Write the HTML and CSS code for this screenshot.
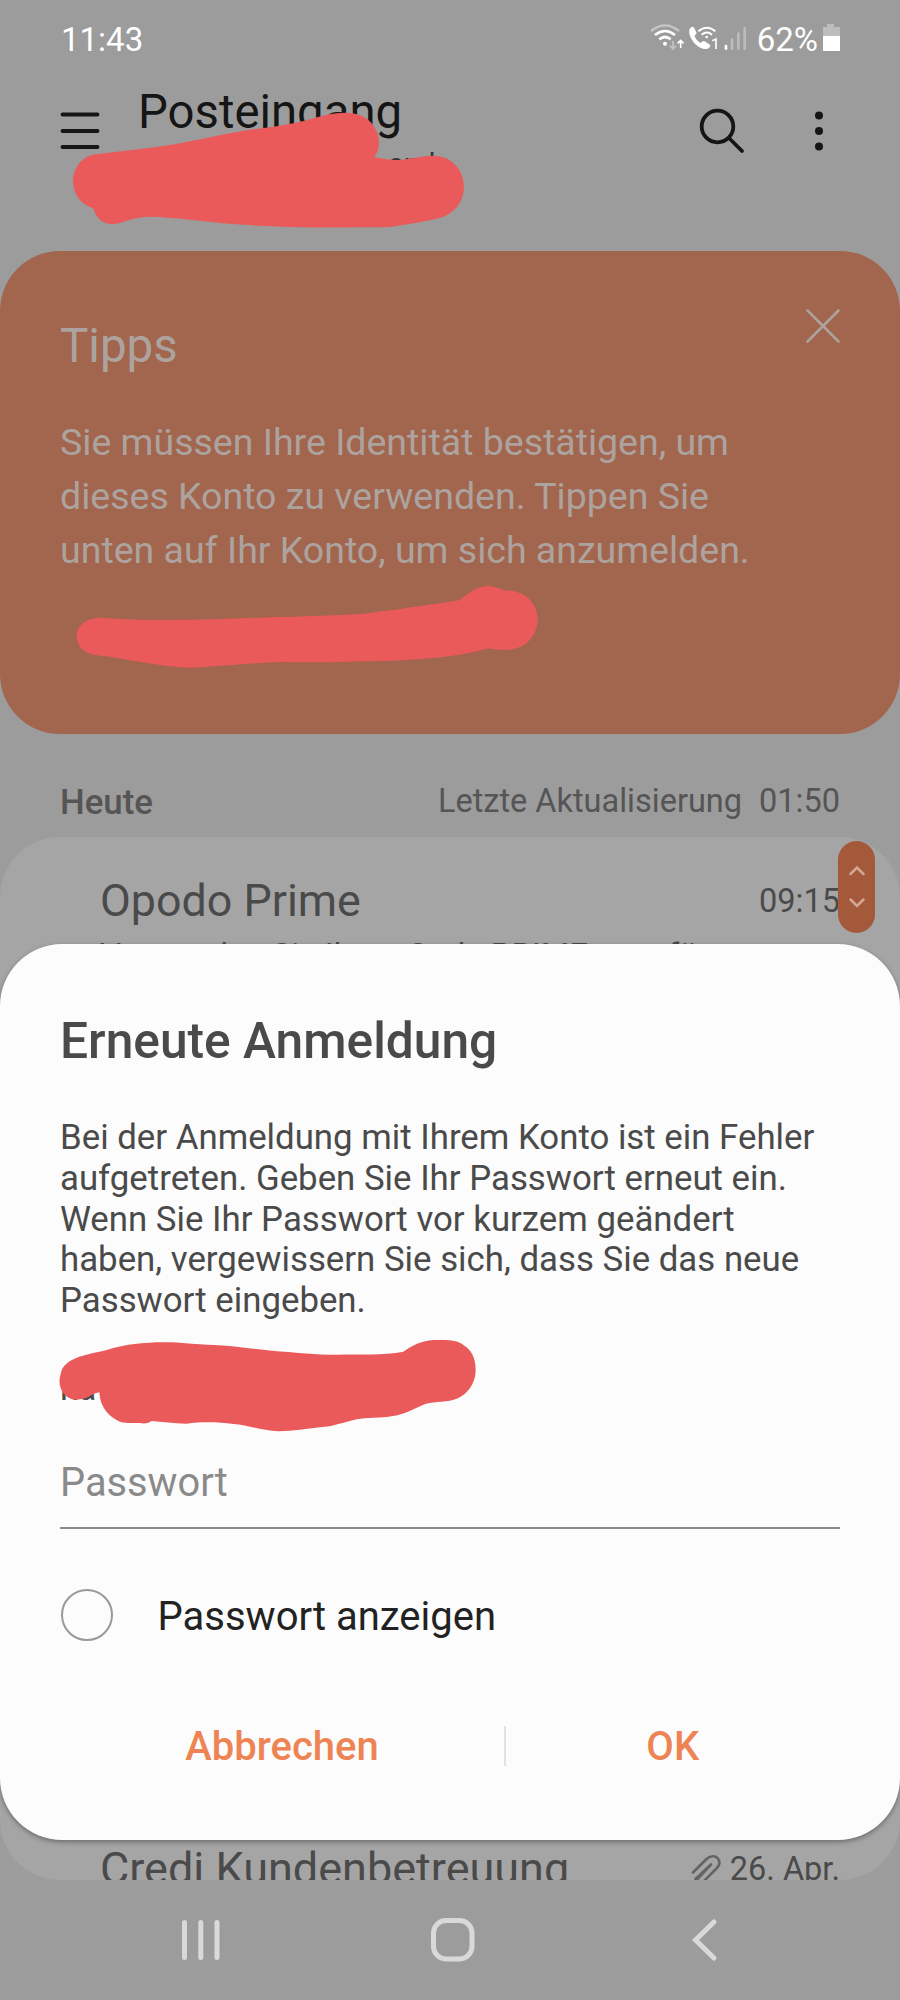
FILE: index.html
```html
<!DOCTYPE html>
<html lang="de">
<head>
<meta charset="utf-8">
<title>Posteingang</title>
<link rel="stylesheet" href="styles.css">
</head>
<body>
<div class="phone">
  <header class="status">
    <span class="time">11:43</span>
    <div class="indicators">
      <svg class="signals" viewBox="145 60 300 105">
        <g fill="none" stroke="#fff" stroke-width="8">
          <path d="M151 93Q193 60 235 93" stroke="#c4c4c4"/>
          <path d="M163 105Q193 81 223 105"/>
          <path d="M176 118Q193 104 210 118"/>
          <path d="M240 144V122M231 130L240 121L249 130" stroke-width="5"/>
          <path d="M217 122V146M208 137L217 147L226 137" stroke="#c4c4c4" stroke-width="5"/>
          <path d="M293 94Q319 72 344 94" stroke-width="6"/>
          <path d="M303 104Q319 91 334 104" stroke-width="6"/>
          <path d="M335 122L346 117V147" stroke-width="5"/>
        </g>
        <circle cx="193" cy="131" r="6" fill="#fff"/>
        <circle cx="318" cy="111" r="4" fill="#fff"/>
        <path d="M266 88Q271 78 279 81L288 99Q287 103 281 107Q287 122 299 129L308 123Q311 122 314 125L329 135Q329 143 319 147Q299 149 280 128Q263 108 266 88Z" fill="#fff"/>
        <g stroke-width="8" stroke-linecap="round" stroke="#bcbcbc">
          <path d="M376 138V146" stroke="#fff"/>
          <path d="M394 119V146M413 101V146M432 84V146"/>
        </g>
      </svg>
      <span class="percent">62%</span>
      <svg class="battery" viewBox="0 0 18 27"><path d="M5 0H12V3H18V27H1V3H5Z" fill="#bdbdbd"/><path d="M1 12H18V27H1Z" fill="#fff"/></svg>
    </div>
  </header>

  <div class="appbar">
    <svg class="menu" viewBox="0 0 40 38"><path d="M2.500 3.500H37.500M2.500 20H37.500M2.500 36H37.500" stroke="#151515" stroke-width="3.800" stroke-linecap="round"/></svg>
    <div class="heading">
      <h1>Posteingang</h1>
      <p>onde</p>
    </div>
    <svg class="search" viewBox="0 0 46 46"><g fill="none" stroke="#151515" stroke-width="3.800" stroke-linecap="round"><circle cx="18.500" cy="18.500" r="15.800"/><path d="M30 30L43 43"/></g></svg>
    <svg class="more" viewBox="0 0 10 40"><g fill="#151515"><circle cx="5" cy="4.500" r="4"/><circle cx="5" cy="20" r="4"/><circle cx="5" cy="35.500" r="4"/></g></svg>
  </div>

  <section class="tips">
    <div class="tips-head">
      <h2>Tipps</h2>
      <svg class="close" viewBox="0 0 34 34"><path d="M1.500 1.500L32.500 32.500M32.500 1.500L1.500 32.500" stroke="#ada39e" stroke-width="2.500" stroke-linecap="round"/></svg>
    </div>
    <p>Sie müssen Ihre Identität bestätigen, um<br>dieses Konto zu verwenden. Tippen Sie<br>unten auf Ihr Konto, um sich anzumelden.</p>
  </section>

  <div class="group">
    <span class="day">Heute</span>
    <span class="updated">Letzte Aktualisierung</span>
    <span class="updated-time">01:50</span>
  </div>

  <main class="mails">
    <article class="mail">
      <div class="mail-top"><span class="sender">Opodo Prime</span><time>09:15</time></div>
      <p class="preview">Verwenden Sie Ihren Code PRIME zum für</p>
    </article>
    <article class="mail last">
      <div class="mail-top"><span class="sender">Credi Kundenbetreuung</span>
        <svg class="clip" viewBox="0 0 32 32"><path d="M3 21L17 7.500C21 3.500 25 3.500 27.500 6C30 9 29 13 26 16L10 32M5 29L20 14M14 12L21 14" fill="none" stroke="none"/><path d="M3 19.500L16.500 6C20 2.500 25 2.500 27.500 5C30.500 8.500 29.500 12.500 26.500 15.500L10.500 31.500M5.500 26L21 11.500M21 11.500L4 30" fill="none" stroke="#646464" stroke-width="2.600" stroke-linecap="round"/></svg>
        <time>26. Apr.</time></div>
    </article>
    <div class="scroller"><svg viewBox="0 0 37 92"><path d="M12.500 33L19 26.500L25.500 33M12.500 58.500L19 65L25.500 58.500" fill="none" stroke="#d3a696" stroke-width="2.500" stroke-linecap="round"/></svg></div>
  </main>

  <nav class="navbar">
    <svg class="recents" viewBox="0 0 40 44"><path d="M4.500 4.500V39.500M20.800 4.500V39.500M37 4.500V39.500" stroke="#d9d9d9" stroke-width="5" stroke-linecap="round"/></svg>
    <svg class="home" viewBox="0 0 46 46"><rect x="3.500" y="3.500" width="38.500" height="38.500" rx="12.500" fill="none" stroke="#d9d9d9" stroke-width="5"/></svg>
    <svg class="back" viewBox="0 0 40 44"><path d="M24 4L5.500 22L24 40" fill="none" stroke="#d9d9d9" stroke-width="5" stroke-linecap="round"/></svg>
  </nav>

  <div class="dialog" role="dialog">
    <h2>Erneute Anmeldung</h2>
    <p class="message">Bei der Anmeldung mit Ihrem Konto ist ein Fehler<br>aufgetreten. Geben Sie Ihr Passwort erneut ein.<br>Wenn Sie Ihr Passwort vor kurzem geändert<br>haben, vergewissern Sie sich, dass Sie das neue<br>Passwort eingeben.</p>
    <p class="account">ka</p>
    <div class="field">Passwort</div>
    <label class="show"><span class="ring"></span><span class="label">Passwort anzeigen</span></label>
    <div class="actions"><button class="cancel">Abbrechen</button><i></i><button class="ok">OK</button></div>
  </div>

  <svg class="marks" viewBox="0 0 2700 6000">
    <g fill="#eb5a5a">
      <path d="M288 463C370 452 460 445 540 430C620 415 690 398 760 388C800 384 840 378 880 370C940 357 980 338 1040 338C1100 338 1137 380 1137 430C1136 452 1130 462 1122 472C1150 476 1170 480 1190 481C1220 480 1260 467 1300 467C1355 467 1392 510 1392 560C1392 600 1370 630 1335 648C1305 660 1270 664 1245 669C1210 674 1180 682 1140 682C1050 681 1000 684 900 682C830 680 760 677 700 672C620 666 530 652 455 650C425 650 400 656 380 662C360 669 350 672 330 672C300 668 287 648 280 625C240 612 220 580 219 545C220 500 248 468 288 463Z"/>
      <path transform="translate(0 720)" d="M300 1133C400 1142 550 1140 650 1138C780 1132 940 1130 1080 1122C1170 1112 1290 1095 1380 1080C1410 1055 1435 1038 1465 1038C1490 1038 1500 1052 1530 1052C1580 1055 1613 1095 1613 1138C1612 1190 1575 1230 1515 1230C1490 1230 1475 1225 1460 1226C1380 1250 1270 1257 1160 1263C1050 1264 950 1269 850 1266C760 1268 680 1278 570 1283C470 1280 380 1255 290 1246C255 1242 230 1220 230 1188C230 1155 260 1135 300 1133Z"/>
      <path transform="translate(0 3960)" d="M185 150C205 110 260 105 320 90C380 70 450 65 520 67C600 75 650 74 710 80C770 87 820 94 865 96C910 100 960 105 1010 104C1080 102 1150 106 1210 95C1240 75 1265 62 1300 60C1330 60 1370 56 1390 75C1415 90 1427 115 1427 150C1427 195 1395 235 1350 242C1325 245 1300 246 1275 252C1240 268 1215 282 1180 288C1140 295 1100 292 1070 298C1030 307 1000 320 960 322C920 327 880 333 835 334C780 330 740 315 700 312C650 305 600 306 560 311C520 310 485 306 455 303C440 312 430 311 420 309C400 308 380 311 360 305C325 290 300 260 298 217C270 222 265 240 225 239C190 235 173 200 180 170Z"/>
    </g>
  </svg>
</div>
</body>
</html>
```

FILE: styles.css
```css
* { box-sizing: border-box; }
body { margin: 0; font-family: Roboto, sans-serif; }
h1, h2, p { margin: 0; font-weight: 400; }
svg { display: block; flex: none; }
button { border: 0; background: none; padding: 0; font: inherit; color: inherit; }

.phone {
  position: relative;
  width: 900px;
  height: 2000px;
  overflow: hidden;
  background: #9c9c9c;
  display: flex;
  flex-direction: column;
}

.status {
  height: 78px;
  padding: 0 60px 0 61px;
  display: flex;
  align-items: center;
  justify-content: space-between;
  font-size: 33px;
  color: #fff;
}
.indicators { display: flex; align-items: center; }
.signals { width: 100px; height: 35px; margin-right: 8px; margin-top: -3px; }
.battery { width: 18px; height: 27px; margin-left: 4px; margin-top: -3px; }

.appbar { height: 173px; padding: 0 61px 0 60px; display: flex; align-items: flex-start; }
.menu { width: 40px; height: 38px; margin-top: 33px; }
.heading { margin-left: 38px; flex: 1; }
.heading h1 { font-size: 47.3px; line-height: 69px; color: #151515; white-space: nowrap; }
.heading p { margin-left: 250px; font-size: 28px; line-height: 34px; color: #333; }
.search { width: 46px; height: 46px; margin-top: 30px; }
.more { width: 10px; height: 40px; margin: 33px 15px 0 69px; }

.tips { height: 483px; padding: 59px 60px 0; border-radius: 60px; background: #a2654e; color: #ada39e; }
.tips-head { display: flex; justify-content: space-between; }
.tips h2 { font-size: 47.5px; line-height: 72px; }
.tips p { margin-top: 33px; font-size: 37.5px; line-height: 54px; white-space: nowrap; }
.close { width: 34px; height: 34px; margin-top: -1px; }

.group { height: 103px; padding: 0 60px; display: flex; align-items: center; font-size: 32.5px; color: #555; }
.day { font-size: 34.8px; font-weight: 500; margin-right: auto; padding-top: 33px; }
.updated, .updated-time { padding-top: 31px; }
.updated-time { margin-left: 17px; }

.mails {
  position: relative;
  height: 1043px;
  border-radius: 60px;
  background: #a5a5a5;
  overflow: hidden;
  display: flex;
  flex-direction: column;
  justify-content: space-between;
  color: #4a4a4a;
}
.mail { padding: 34px 60px 0 100px; }
.mail.last { height: 41px; padding-top: 0; }
.mail-top { display: flex; align-items: center; line-height: 60px; white-space: nowrap; }
.sender { font-size: 44.8px; margin-right: auto; }
.last .sender { font-size: 45px; }
.mail time { font-size: 32.5px; line-height: 58px; }
.clip { width: 32px; height: 32px; margin-right: 8px; }
.preview { margin-top: 5px; font-size: 32.9px; line-height: 40px; white-space: nowrap; }
.scroller { position: absolute; left: 838px; top: 4px; width: 37px; height: 92px; border-radius: 19px; background: #a5593b; }

.navbar { height: 120px; padding: 0 170px 0 180px; display: flex; align-items: center; }
.recents, .back { width: 40px; height: 44px; }
.home { width: 46px; height: 46px; margin: 0 auto 0 210px; }

.dialog {
  position: absolute;
  left: 0;
  top: 944px;
  width: 900px;
  height: 896px;
  padding: 62px 60px 0;
  border-radius: 62px;
  background: #fcfcfc;
  box-shadow: 0 2px 5px rgba(0, 0, 0, .35);
  color: #4a4a4a;
}
.dialog h2 { font-size: 49.7px; line-height: 70px; font-weight: 500; }
.message { margin-top: 41px; font-size: 34.8px; line-height: 40.75px; white-space: nowrap; }
.account { margin-top: 47px; font-size: 34.5px; line-height: 40px; }
.field { margin-top: 29px; height: 92px; border-bottom: 2px solid #8a8a8a; font-size: 39.8px; line-height: 92px; color: #8a8a8a; }
.show { margin-top: 60px; height: 53px; display: flex; align-items: center; font-size: 40px; color: #222; }
.label { padding-top: 2px; }
.ring { width: 52px; height: 52px; margin: 0 44.5px 0 1px; border: 2px solid #999; border-radius: 50%; }
.actions { margin-top: 69px; height: 70px; display: flex; align-items: center; font-size: 40px; font-weight: 500; color: #ee8454; }
.actions button { padding-top: 2px; }
.cancel { width: 444px; }
.ok { flex: 1; }
.actions i { width: 1.5px; height: 40px; background: #e2e2e2; }

.marks { position: absolute; left: 0; top: 0; width: 900px; height: 2000px; pointer-events: none; }
```
